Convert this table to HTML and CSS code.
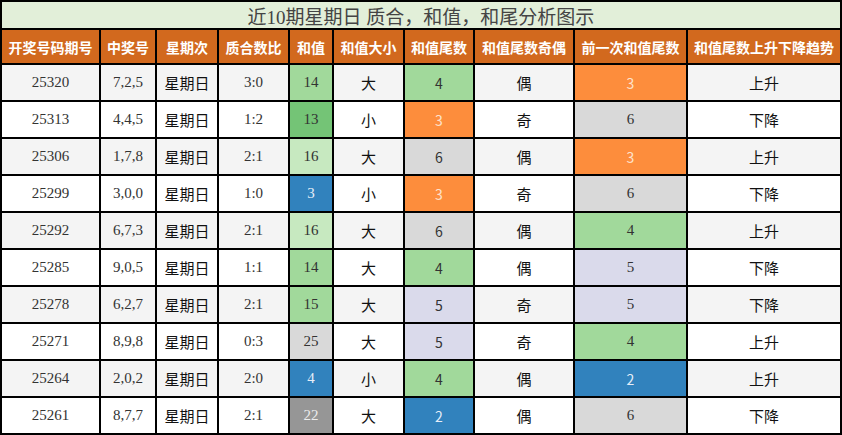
FILE: index.html
```html
<!DOCTYPE html>
<html lang="zh">
<head>
<meta charset="utf-8">
<title>近10期星期日 质合，和值，和尾分析图示</title>
<link rel="stylesheet" href="styles.css">
</head>
<body>
<div class="sheet" role="table">
  <div class="title" role="caption">近10期星期日 质合，和值，和尾分析图示</div>

  <div class="th">开奖号码期号</div>
  <div class="th">中奖号</div>
  <div class="th">星期次</div>
  <div class="th">质合数比</div>
  <div class="th">和值</div>
  <div class="th">和值大小</div>
  <div class="th">和值尾数</div>
  <div class="th">和值尾数奇偶</div>
  <div class="th">前一次和值尾数</div>
  <div class="th">和值尾数上升下降趋势</div>

  <div class="td num alt">25320</div><div class="td num alt">7,2,5</div><div class="td cjk alt">星期日</div><div class="td num alt">3:0</div><div class="td num c-g2">14</div><div class="td cjk alt">大</div><div class="td sans c-g2">4</div><div class="td cjk alt">偶</div><div class="td sans c-or">3</div><div class="td cjk alt">上升</div>

  <div class="td num">25313</div><div class="td num">4,4,5</div><div class="td cjk">星期日</div><div class="td num">1:2</div><div class="td num c-g1">13</div><div class="td cjk">小</div><div class="td sans c-or">3</div><div class="td cjk">奇</div><div class="td num c-gy">6</div><div class="td cjk">下降</div>

  <div class="td num alt">25306</div><div class="td num alt">1,7,8</div><div class="td cjk alt">星期日</div><div class="td num alt">2:1</div><div class="td num c-g3">16</div><div class="td cjk alt">大</div><div class="td sans c-gy">6</div><div class="td cjk alt">偶</div><div class="td sans c-or">3</div><div class="td cjk alt">上升</div>

  <div class="td num">25299</div><div class="td num">3,0,0</div><div class="td cjk">星期日</div><div class="td num">1:0</div><div class="td num c-bl">3</div><div class="td cjk">小</div><div class="td sans c-or">3</div><div class="td cjk">奇</div><div class="td num c-gy">6</div><div class="td cjk">下降</div>

  <div class="td num alt">25292</div><div class="td num alt">6,7,3</div><div class="td cjk alt">星期日</div><div class="td num alt">2:1</div><div class="td num c-g3">16</div><div class="td cjk alt">大</div><div class="td sans c-gy">6</div><div class="td cjk alt">偶</div><div class="td num c-g2">4</div><div class="td cjk alt">上升</div>

  <div class="td num">25285</div><div class="td num">9,0,5</div><div class="td cjk">星期日</div><div class="td num">1:1</div><div class="td num c-g2">14</div><div class="td cjk">大</div><div class="td sans c-g2">4</div><div class="td cjk">偶</div><div class="td num c-lv">5</div><div class="td cjk">下降</div>

  <div class="td num alt">25278</div><div class="td num alt">6,2,7</div><div class="td cjk alt">星期日</div><div class="td num alt">2:1</div><div class="td num c-g2">15</div><div class="td cjk alt">大</div><div class="td sans c-lv">5</div><div class="td cjk alt">奇</div><div class="td num c-lv">5</div><div class="td cjk alt">下降</div>

  <div class="td num">25271</div><div class="td num">8,9,8</div><div class="td cjk">星期日</div><div class="td num">0:3</div><div class="td num c-gy">25</div><div class="td cjk">大</div><div class="td sans c-lv">5</div><div class="td cjk">奇</div><div class="td num c-g2">4</div><div class="td cjk">上升</div>

  <div class="td num alt">25264</div><div class="td num alt">2,0,2</div><div class="td cjk alt">星期日</div><div class="td num alt">2:0</div><div class="td num c-bl">4</div><div class="td cjk alt">小</div><div class="td sans c-g2">4</div><div class="td cjk alt">偶</div><div class="td sans c-bl">2</div><div class="td cjk alt">上升</div>

  <div class="td num">25261</div><div class="td num">8,7,7</div><div class="td cjk">星期日</div><div class="td num">2:1</div><div class="td num c-dg">22</div><div class="td cjk">大</div><div class="td sans c-bl">2</div><div class="td cjk">偶</div><div class="td num c-gy">6</div><div class="td cjk">下降</div>
</div>
</body>
</html>
```

FILE: styles.css
```css
html, body {
  margin: 0;
  padding: 0;
  background: #ffffff;
}

.sheet {
  display: grid;
  grid-template-columns: 99px 56px 62px 71px 44px 71px 70px 100px 113px 154px;
  grid-template-rows: 28px 35px repeat(10, 37px);
  width: 842px;
  box-sizing: border-box;
  border-left: 2px solid #000;
  border-top: 2px solid #000;
  font-family: "Liberation Serif", "Noto Sans CJK SC", serif;
}

.sheet > div {
  box-sizing: border-box;
  border-right: 2px solid #000;
  border-bottom: 2px solid #000;
  display: flex;
  align-items: center;
  justify-content: center;
  white-space: nowrap;
  overflow: hidden;
}

.title {
  grid-column: 1 / -1;
  background: #e2efd9;
  color: #444;
  font-size: 19px;
  font-family: "Liberation Serif", "Noto Sans CJK SC", serif;
  padding-top: 1px;
}

.th {
  background: #d2691e;
  color: #fff;
  font-weight: bold;
  font-size: 14px;
  font-family: "Noto Sans CJK SC", sans-serif;
}

.td {
  background: #fff;
  color: #333;
}

.td.alt {
  background: #f4f4f4;
}

.num {
  font-family: "Liberation Serif", serif;
  font-size: 15px;
}

.sans {
  font-family: "Noto Sans CJK SC", sans-serif;
  font-size: 14px;
}

.cjk {
  font-family: "Noto Sans CJK SC", sans-serif;
  font-size: 15px;
  color: #111;
}

.td.c-g1 { background: #74c476; }
.td.c-g2 { background: #a1d99b; }
.td.c-g3 { background: #c7e9c0; }
.td.c-gy { background: #d9d9d9; }
.td.c-lv { background: #dadaeb; }
.td.c-or { background: #fd8d3c; color: #fde3cc; }
.td.c-bl { background: #3182bd; color: #e6eef8; }
.td.c-dg { background: #969696; color: #ececec; }
```
